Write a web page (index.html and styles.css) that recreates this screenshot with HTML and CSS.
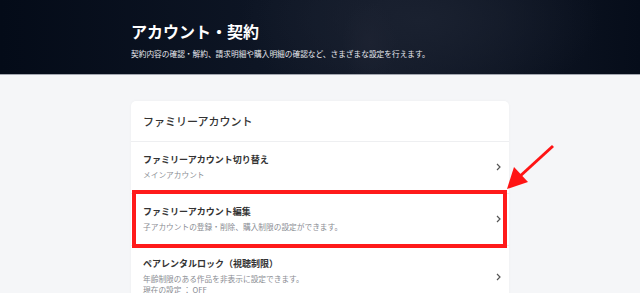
FILE: index.html
```html
<!DOCTYPE html>
<html lang="ja">
<head>
    <meta charset="UTF-8">
    <title>アカウント・契約</title>
    <link rel="stylesheet" href="styles.css">
</head>
<body>
<header class="hero">
    <div class="hero-inner">
        <h1>アカウント・契約</h1>
        <p>契約内容の確認・解約、請求明細や購入明細の確認など、さまざまな設定を行えます。</p>
    </div>
</header>
<main class="content">
    <section class="card">
        <h2 class="card-title">ファミリーアカウント</h2>
        <a class="row" href="#">
            <div class="row-text">
                <div class="row-title">ファミリーアカウント切り替え</div>
                <div class="row-sub">メインアカウント</div>
            </div>
            <svg class="chev" width="5" height="8" viewBox="0 0 5 8"><path d="M1 1l3 3-3 3" fill="none" stroke="#555" stroke-width="1.2"/></svg>
        </a>
        <a class="row marked" href="#">
            <div class="row-text">
                <div class="row-title">ファミリーアカウント編集</div>
                <div class="row-sub">子アカウントの登録・削除、購入制限の設定ができます。</div>
            </div>
            <svg class="chev" width="5" height="8" viewBox="0 0 5 8"><path d="M1 1l3 3-3 3" fill="none" stroke="#555" stroke-width="1.2"/></svg>
            <span class="mark"></span>
        </a>
        <a class="row" href="#">
            <div class="row-text">
                <div class="row-title">ペアレンタルロック（視聴制限）</div>
                <div class="row-sub">年齢制限のある作品を非表示に設定できます。<br>現在の設定 ： OFF</div>
            </div>
            <svg class="chev" width="5" height="8" viewBox="0 0 5 8"><path d="M1 1l3 3-3 3" fill="none" stroke="#555" stroke-width="1.2"/></svg>
        </a>
    </section>
</main>
<!-- annotation arrow -->
<svg class="arrow" width="640" height="293" viewBox="0 0 640 293">
    <line x1="553" y1="146" x2="518" y2="178" stroke="#ff1414" stroke-width="3"/>
    <polygon points="507,189 514,167 528,182" fill="#ff1414"/>
</svg>
</body>
</html>
```

FILE: styles.css
```css
body {
    margin: 0;
    background: #f5f6f8;
    font-family: "Noto Sans CJK JP", "Noto Sans", sans-serif;
    color: #333;
    height: 293px;
    overflow: hidden;
}
.hero {
    height: 74px;
    border-bottom: 1px solid #a3a7b0;
    background:
        radial-gradient(ellipse 28px 40px at 370px 42px, #1c2231 0%, #1c223100 100%),
        radial-gradient(ellipse 180px 90px at 420px 20px, #1a2130 0%, #1a213000 100%),
        linear-gradient(90deg, #040b18 0%, #0d1524 40%, #141b2a 60%, #060d1a 100%);
}
.hero-inner { width: 378px; margin: 0 auto; padding-top: 20px; }
.hero h1 {
    margin: 0;
    font-size: 16px;
    line-height: 22px;
    font-weight: bold;
    color: #fff;
}
.hero p {
    margin: 6px 0 0;
    font-size: 7.7px;
    line-height: 11px;
    color: #e6e8ee;
}
.content { padding-top: 26px; }
.card {
    width: 378px;
    margin: 0 auto;
    background: #fff;
    border-radius: 5px;
    box-shadow: 0 0 3px #0000000a;
}
.card-title {
    margin: 0;
    height: 40px;
    line-height: 40px;
    padding: 0 12px;
    font-size: 11px;
    font-weight: 500;
    color: #333;
    border-bottom: 1px solid #eeeff1;
}
.row {
    position: relative;
    display: flex;
    align-items: center;
    justify-content: space-between;
    padding: 12px 8px 13px 12px;
    border-bottom: 1px solid #eeeff1;
    text-decoration: none;
    color: inherit;
}
.row-title { font-size: 9px; line-height: 12px; font-weight: bold; color: #333; }
.row-sub { margin-top: 3px; font-size: 7.7px; line-height: 11px; color: #8a8d93; }
.chev { flex: none; }
.mark {
    position: absolute;
    top: -4px; bottom: -3px; left: 1px; right: 2px;
    border: 4px solid #ff1a1a;
    pointer-events: none;
}
.arrow { position: absolute; left: 0; top: 0; pointer-events: none; }
```
